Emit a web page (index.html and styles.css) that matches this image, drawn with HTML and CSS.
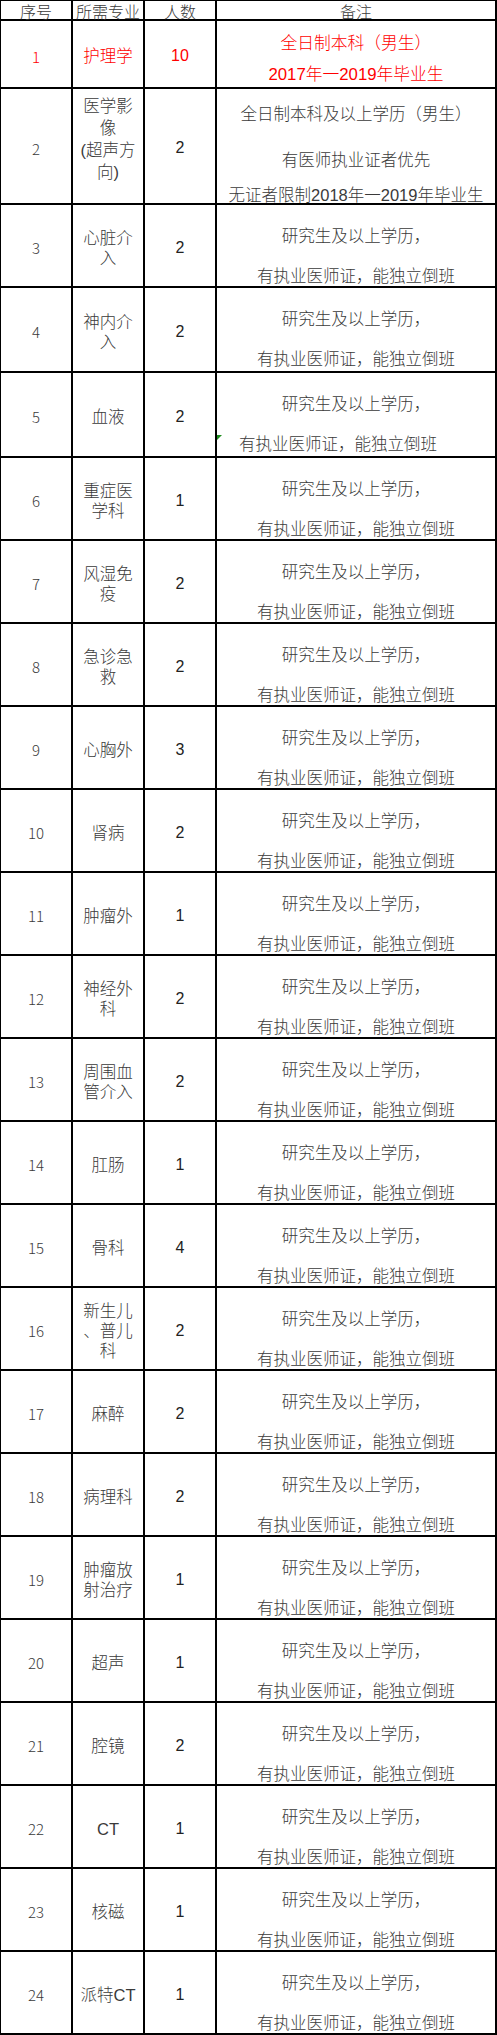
FILE: index.html
```html
<!DOCTYPE html>
<html lang="zh-CN">
<head>
<meta charset="utf-8">
<title>招聘岗位</title>
<link rel="stylesheet" href="styles.css">
</head>
<body>
<div class="sheet">
  <div class="c h">序号</div>
  <div class="c h">所需专业</div>
  <div class="c h">人数</div>
  <div class="c h">备注</div>

  <div class="c n red">1</div>
  <div class="c m red">护理学</div>
  <div class="c q red">10</div>
  <div class="c r r1 red"><p class="ln">全日制本科（男生）</p><p class="ln">2017年一2019年毕业生</p></div>

  <div class="c n">2</div>
  <div class="c m m2">医学影像<br>(超声方向)</div>
  <div class="c q">2</div>
  <div class="c r r2"><p class="ln">全日制本科及以上学历（男生）</p><p class="ln">有医师执业证者优先</p><p class="ln">无证者限制2018年一2019年毕业生</p></div>

  <div class="c n">3</div><div class="c m">心脏介入</div><div class="c q">2</div>
  <div class="c r"><p class="ln">研究生及以上学历，</p><p class="ln">有执业医师证，能独立倒班</p></div>

  <div class="c n">4</div><div class="c m">神内介入</div><div class="c q">2</div>
  <div class="c r"><p class="ln">研究生及以上学历，</p><p class="ln">有执业医师证，能独立倒班</p></div>

  <div class="c n">5</div><div class="c m">血液</div><div class="c q">2</div>
  <div class="c r"><span class="flag"></span><p class="ln">研究生及以上学历，</p><p class="ln shift">有执业医师证，能独立倒班</p></div>

  <div class="c n">6</div><div class="c m">重症医学科</div><div class="c q">1</div>
  <div class="c r"><p class="ln">研究生及以上学历，</p><p class="ln">有执业医师证，能独立倒班</p></div>

  <div class="c n">7</div><div class="c m">风湿免疫</div><div class="c q">2</div>
  <div class="c r"><p class="ln">研究生及以上学历，</p><p class="ln">有执业医师证，能独立倒班</p></div>

  <div class="c n">8</div><div class="c m">急诊急救</div><div class="c q">2</div>
  <div class="c r"><p class="ln">研究生及以上学历，</p><p class="ln">有执业医师证，能独立倒班</p></div>

  <div class="c n">9</div><div class="c m">心胸外</div><div class="c q">3</div>
  <div class="c r"><p class="ln">研究生及以上学历，</p><p class="ln">有执业医师证，能独立倒班</p></div>

  <div class="c n">10</div><div class="c m">肾病</div><div class="c q">2</div>
  <div class="c r"><p class="ln">研究生及以上学历，</p><p class="ln">有执业医师证，能独立倒班</p></div>

  <div class="c n">11</div><div class="c m">肿瘤外</div><div class="c q">1</div>
  <div class="c r"><p class="ln">研究生及以上学历，</p><p class="ln">有执业医师证，能独立倒班</p></div>

  <div class="c n">12</div><div class="c m">神经外科</div><div class="c q">2</div>
  <div class="c r"><p class="ln">研究生及以上学历，</p><p class="ln">有执业医师证，能独立倒班</p></div>

  <div class="c n">13</div><div class="c m">周围血管介入</div><div class="c q">2</div>
  <div class="c r"><p class="ln">研究生及以上学历，</p><p class="ln">有执业医师证，能独立倒班</p></div>

  <div class="c n">14</div><div class="c m">肛肠</div><div class="c q">1</div>
  <div class="c r"><p class="ln">研究生及以上学历，</p><p class="ln">有执业医师证，能独立倒班</p></div>

  <div class="c n">15</div><div class="c m">骨科</div><div class="c q">4</div>
  <div class="c r"><p class="ln">研究生及以上学历，</p><p class="ln">有执业医师证，能独立倒班</p></div>

  <div class="c n">16</div><div class="c m">新生儿、普儿科</div><div class="c q">2</div>
  <div class="c r"><p class="ln">研究生及以上学历，</p><p class="ln">有执业医师证，能独立倒班</p></div>

  <div class="c n">17</div><div class="c m">麻醉</div><div class="c q">2</div>
  <div class="c r"><p class="ln">研究生及以上学历，</p><p class="ln">有执业医师证，能独立倒班</p></div>

  <div class="c n">18</div><div class="c m">病理科</div><div class="c q">2</div>
  <div class="c r"><p class="ln">研究生及以上学历，</p><p class="ln">有执业医师证，能独立倒班</p></div>

  <div class="c n">19</div><div class="c m">肿瘤放射治疗</div><div class="c q">1</div>
  <div class="c r"><p class="ln">研究生及以上学历，</p><p class="ln">有执业医师证，能独立倒班</p></div>

  <div class="c n">20</div><div class="c m">超声</div><div class="c q">1</div>
  <div class="c r"><p class="ln">研究生及以上学历，</p><p class="ln">有执业医师证，能独立倒班</p></div>

  <div class="c n">21</div><div class="c m">腔镜</div><div class="c q">2</div>
  <div class="c r"><p class="ln">研究生及以上学历，</p><p class="ln">有执业医师证，能独立倒班</p></div>

  <div class="c n">22</div><div class="c m">CT</div><div class="c q">1</div>
  <div class="c r"><p class="ln">研究生及以上学历，</p><p class="ln">有执业医师证，能独立倒班</p></div>

  <div class="c n">23</div><div class="c m">核磁</div><div class="c q">1</div>
  <div class="c r"><p class="ln">研究生及以上学历，</p><p class="ln">有执业医师证，能独立倒班</p></div>

  <div class="c n">24</div><div class="c m">派特CT</div><div class="c q">1</div>
  <div class="c r"><p class="ln">研究生及以上学历，</p><p class="ln">有执业医师证，能独立倒班</p></div>
</div>
</body>
</html>
```

FILE: styles.css
```css
html, body {
  margin: 0;
  padding: 0;
  background: #ffffff;
}

.sheet {
  width: 497px;
  box-sizing: border-box;
  display: grid;
  grid-template-columns: 70px 70px 70px 278px;
  grid-template-rows: 18px 66px 114px 81px 83px 83px repeat(19, 81px);
  gap: 2px;
  padding: 1px 2px 2px 1px;
  background: #000000;
  font-family: "Liberation Sans", "Noto Sans CJK SC", sans-serif;
  font-weight: 300;
  color: #3a3a3a;
}

.c {
  background: #ffffff;
  display: flex;
  flex-direction: column;
  align-items: center;
  justify-content: center;
  text-align: center;
  min-width: 0;
  overflow: visible;
}

.h {
  font-family: "Noto Sans CJK SC", sans-serif;
  font-size: 16px;
  line-height: 18px;
  padding-top: 1px;
  justify-content: flex-start;
}

.n {
  font-family: "Noto Sans CJK SC", sans-serif;
  font-size: 15px;
  padding-top: 4px;
}

.m {
  font-size: 16.5px;
  line-height: 20px;
  padding: 4px 6px 0;
  line-break: anywhere;
}

.m2 {
  line-height: 22px;
  padding: 0 6px 14px;
}

.q {
  font-size: 16px;
  font-weight: 400;
  padding-top: 4px;
  color: #222222;
}

.r {
  position: relative;
  font-size: 16.5px;
  justify-content: flex-start;
  padding-top: 23px;
  gap: 23px;
}

.ln {
  margin: 0;
  line-height: 17px;
  white-space: nowrap;
}

.r1 {
  padding-top: 14px;
  gap: 14px;
  font-size: 16.75px;
}

.r2 {
  padding-top: 17px;
  gap: 29px;
}

.r2 .ln:last-child {
  margin-top: -11px;
}

.shift {
  margin-right: 36px;
}

.red {
  color: #ff0000;
}

.flag {
  position: absolute;
  left: 0;
  top: 62px;
  width: 0;
  height: 0;
  border-top: 5px solid #1e8c1e;
  border-right: 5px solid transparent;
}
```
